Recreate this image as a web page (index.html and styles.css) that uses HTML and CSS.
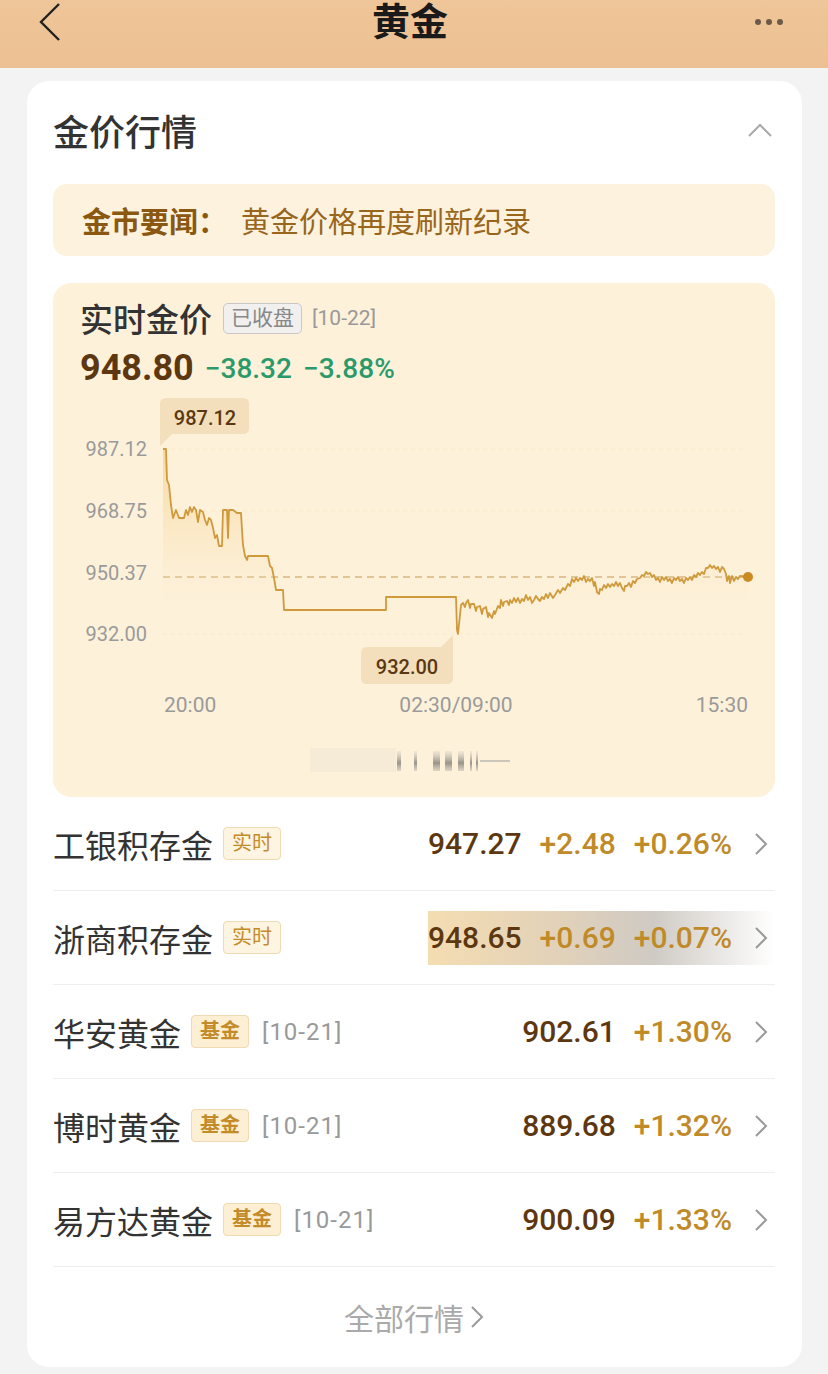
FILE: index.html
```html
<!DOCTYPE html>
<html lang="zh-CN">
<head>
  <meta charset="UTF-8">
  <title>黄金</title>
  <meta name="viewport" content="width=device-width, initial-scale=1.0">
  <link rel="stylesheet" href="styles.css">
</head>
<body>

  <header class="topbar">
    <svg class="back" width="26" height="42" viewBox="0 0 26 42"><path d="M22 3 L4 21 L22 39"/></svg>
    <h1 class="topbar-title">黄金</h1>
    <span class="more"><i></i><i></i><i></i></span>
  </header>

  <main class="card">
    <div class="section-head">
      <h2>金价行情</h2>
      <svg class="fold" width="26" height="16" viewBox="0 0 26 16"><path d="M2 14 L13 3 L24 14"/></svg>
    </div>

    <div class="news">
      <b>金市要闻：</b>
      <span>黄金价格再度刷新纪录</span>
    </div>

    <!-- realtime price + intraday chart -->
    <section class="live">
      <div class="live-head">
        <span class="live-title">实时金价</span>
        <span class="tag-closed">已收盘</span>
        <span class="live-date">[10-22]</span>
      </div>
      <div class="live-price">
        <span class="price-big">948.80</span>
        <span class="down">−38.32</span>
        <span class="down">−3.88%</span>
      </div>

      <svg class="chart" width="722" height="409" viewBox="53 388 722 409">
        <defs>
          <linearGradient id="area" x1="0" y1="449" x2="0" y2="615" gradientUnits="userSpaceOnUse">
            <stop offset="0" stop-color="#f6cf8a" stop-opacity="0.75"/>
            <stop offset="1" stop-color="#fbe9c8" stop-opacity="0"/>
          </linearGradient>
          <linearGradient id="bar" x1="0" y1="0" x2="0" y2="1">
            <stop offset="0" stop-color="#9a9a9a" stop-opacity="0.15"/>
            <stop offset="0.6" stop-color="#555" stop-opacity="0.8"/>
            <stop offset="1" stop-color="#777" stop-opacity="0.3"/>
          </linearGradient>
        </defs>

        <g class="grid">
          <line x1="163" y1="449" x2="748" y2="449"/>
          <line x1="163" y1="511" x2="748" y2="511"/>
          <line x1="163" y1="634" x2="748" y2="634"/>
        </g>
        <line class="avg" x1="163" y1="577" x2="748" y2="577"/>

        <g class="y-axis">
          <text x="147" y="456">987.12</text>
          <text x="147" y="518">968.75</text>
          <text x="147" y="580">950.37</text>
          <text x="147" y="641">932.00</text>
        </g>

        <path class="area" d="M163,449 L166,449 L167,480 L169,485 L171,505 L173,518 L176,510 L179,518 L184,518 L186,510 L188,515 L190,507 L192,512 L194,507 L196,510 L198,522 L200,510 L203,512 L205,520 L207,525 L209,518 L211,520 L213,528 L215,538 L217,535 L219,546 L222,546 L223,510 L227,510 L228,538 L229,510 L233,510 L237,513 L241,513 L242,530 L243,545 L245,556 L247,560 L248,556 L268,556 L270,566 L272,568 L274,578 L276,590 L283,590 L284,610 L386,610 L386,597 L456,597 L457,630 L458,634 L460,615 L461,605 L463,603 L465,607 L466,603 L468,600 L470,608 L471,604 L474,604 L476,611 L477,607 L480,606 L482,614 L483,609 L486,607 L488,617 L489,613 L492,618 L494,611 L495,614 L498,606 L500,608 L501,600 L503,606 L504,602 L507,601 L509,605 L510,600 L512,603 L514,598 L516,602 L518,598 L520,603 L522,599 L524,601 L526,595 L528,600 L530,597 L532,603 L534,600 L536,596 L538,599 L540,601 L542,597 L544,599 L546,594 L548,598 L550,593 L553,598 L555,595 L558,590 L560,593 L563,588 L565,590 L568,584 L570,586 L572,579 L574,582 L576,578 L578,581 L580,578 L582,580 L584,576 L586,582 L588,579 L590,581 L592,578 L594,586 L595,582 L597,592 L599,594 L600,589 L602,590 L604,585 L606,588 L608,584 L610,587 L612,584 L614,586 L616,582 L618,586 L620,583 L622,588 L624,591 L625,586 L627,586 L629,583 L631,587 L633,581 L635,583 L637,579 L640,578 L642,575 L644,576 L646,572 L648,574 L650,573 L652,577 L654,575 L656,580 L658,578 L660,582 L662,577 L664,580 L666,577 L668,581 L670,579 L672,583 L674,578 L676,580 L678,577 L680,581 L682,579 L684,583 L686,578 L688,580 L690,577 L692,580 L694,575 L696,577 L698,573 L700,575 L702,572 L704,574 L706,568 L708,568 L710,565 L712,568 L714,566 L716,569 L718,567 L720,572 L722,567 L724,569 L726,574 L727,581 L729,576 L730,583 L732,576 L734,581 L736,577 L738,579 L740,576 L748,577 L748,640 L163,640 Z"/>
        <path class="line" d="M163,449 L166,449 L167,480 L169,485 L171,505 L173,518 L176,510 L179,518 L184,518 L186,510 L188,515 L190,507 L192,512 L194,507 L196,510 L198,522 L200,510 L203,512 L205,520 L207,525 L209,518 L211,520 L213,528 L215,538 L217,535 L219,546 L222,546 L223,510 L227,510 L228,538 L229,510 L233,510 L237,513 L241,513 L242,530 L243,545 L245,556 L247,560 L248,556 L268,556 L270,566 L272,568 L274,578 L276,590 L283,590 L284,610 L386,610 L386,597 L456,597 L457,630 L458,634 L460,615 L461,605 L463,603 L465,607 L466,603 L468,600 L470,608 L471,604 L474,604 L476,611 L477,607 L480,606 L482,614 L483,609 L486,607 L488,617 L489,613 L492,618 L494,611 L495,614 L498,606 L500,608 L501,600 L503,606 L504,602 L507,601 L509,605 L510,600 L512,603 L514,598 L516,602 L518,598 L520,603 L522,599 L524,601 L526,595 L528,600 L530,597 L532,603 L534,600 L536,596 L538,599 L540,601 L542,597 L544,599 L546,594 L548,598 L550,593 L553,598 L555,595 L558,590 L560,593 L563,588 L565,590 L568,584 L570,586 L572,579 L574,582 L576,578 L578,581 L580,578 L582,580 L584,576 L586,582 L588,579 L590,581 L592,578 L594,586 L595,582 L597,592 L599,594 L600,589 L602,590 L604,585 L606,588 L608,584 L610,587 L612,584 L614,586 L616,582 L618,586 L620,583 L622,588 L624,591 L625,586 L627,586 L629,583 L631,587 L633,581 L635,583 L637,579 L640,578 L642,575 L644,576 L646,572 L648,574 L650,573 L652,577 L654,575 L656,580 L658,578 L660,582 L662,577 L664,580 L666,577 L668,581 L670,579 L672,583 L674,578 L676,580 L678,577 L680,581 L682,579 L684,583 L686,578 L688,580 L690,577 L692,580 L694,575 L696,577 L698,573 L700,575 L702,572 L704,574 L706,568 L708,568 L710,565 L712,568 L714,566 L716,569 L718,567 L720,572 L722,567 L724,569 L726,574 L727,581 L729,576 L730,583 L732,576 L734,581 L736,577 L738,579 L740,576 L748,577"/>
        <circle class="last" cx="748" cy="577" r="5"/>

        <!-- high / low markers -->
        <g class="tip">
          <path d="M166,398 H243 Q249,398 249,404 V428 Q249,434 243,434 H172 L160,446 V404 Q160,398 166,398 Z"/>
          <text x="205" y="425">987.12</text>
        </g>
        <g class="tip">
          <path d="M367,647 H441 L453,635 V678 Q453,684 447,684 H367 Q361,684 361,678 V653 Q361,647 367,647 Z"/>
          <text x="407" y="674">932.00</text>
        </g>

        <g class="x-axis">
          <text x="164" y="712" text-anchor="start">20:00</text>
          <text x="456" y="712" text-anchor="middle">02:30/09:00</text>
          <text x="748" y="712" text-anchor="end">15:30</text>
        </g>

        <!-- faded watermark -->
        <g class="watermark">
          <rect class="faint" x="310" y="748" width="86" height="24"/>
          <rect x="397" y="751" width="4" height="20"/>
          <rect x="414" y="751" width="3" height="20"/>
          <rect x="433" y="751" width="7" height="20"/>
          <rect x="445" y="751" width="7" height="20"/>
          <rect x="458" y="751" width="6" height="20"/>
          <rect x="470" y="751" width="2" height="20"/>
          <rect x="476" y="751" width="2" height="20"/>
          <rect class="dash" x="480" y="760" width="30" height="2"/>
        </g>
      </svg>
    </section>

    <ul class="quotes">
      <li class="quote">
        <span class="quote-name">工银积存金</span>
        <span class="tag">实时</span>
        <div class="quote-right">
          <span class="quote-price">947.27</span>
          <span class="up">+2.48</span>
          <span class="up">+0.26%</span>
          <svg class="arrow" width="14" height="24" viewBox="0 0 14 24"><path d="M2 2 L12 12 L2 22"/></svg>
        </div>
      </li>
      <li class="quote">
        <span class="quote-name">浙商积存金</span>
        <span class="tag">实时</span>
        <div class="quote-right flash">
          <span class="quote-price">948.65</span>
          <span class="up">+0.69</span>
          <span class="up">+0.07%</span>
          <svg class="arrow" width="14" height="24" viewBox="0 0 14 24"><path d="M2 2 L12 12 L2 22"/></svg>
        </div>
      </li>
      <li class="quote">
        <span class="quote-name">华安黄金</span>
        <span class="tag tag-fund">基金</span>
        <span class="quote-date">[10-21]</span>
        <div class="quote-right">
          <span class="quote-price">902.61</span>
          <span class="up">+1.30%</span>
          <svg class="arrow" width="14" height="24" viewBox="0 0 14 24"><path d="M2 2 L12 12 L2 22"/></svg>
        </div>
      </li>
      <li class="quote">
        <span class="quote-name">博时黄金</span>
        <span class="tag tag-fund">基金</span>
        <span class="quote-date">[10-21]</span>
        <div class="quote-right">
          <span class="quote-price">889.68</span>
          <span class="up">+1.32%</span>
          <svg class="arrow" width="14" height="24" viewBox="0 0 14 24"><path d="M2 2 L12 12 L2 22"/></svg>
        </div>
      </li>
      <li class="quote">
        <span class="quote-name">易方达黄金</span>
        <span class="tag tag-fund">基金</span>
        <span class="quote-date">[10-21]</span>
        <div class="quote-right">
          <span class="quote-price">900.09</span>
          <span class="up">+1.33%</span>
          <svg class="arrow" width="14" height="24" viewBox="0 0 14 24"><path d="M2 2 L12 12 L2 22"/></svg>
        </div>
      </li>
    </ul>

    <a class="all-link">全部行情<svg width="14" height="24" viewBox="0 0 14 24"><path d="M2 2 L12 12 L2 22"/></svg></a>
  </main>

</body>
</html>
```

FILE: styles.css
```css
body {
  font-family: Roboto, "Noto Sans CJK SC", sans-serif;
  background-color: #f3f3f3;
  margin: 0;
  padding: 0;
  color: #333;
}
h1, h2 {
  margin: 0;
}
ul {
  list-style: none;
  margin: 0;
  padding: 0;
}

/* top bar */
.topbar {
  display: grid;
  grid-template-columns: 1fr auto 1fr;
  align-items: center;
  height: 44px;
  padding: 0 45px 24px 37px;
  background: linear-gradient(180deg, #efc699 0%, #ecc092 100%);
}
.back path {
  fill: none;
  stroke: #222;
  stroke-width: 2.4;
}
.topbar-title {
  font-size: 38px;
  font-weight: 700;
  color: #1a1a1a;
  line-height: 44px;
}
.more {
  justify-self: end;
  display: flex;
  gap: 5px;
}
.more i {
  width: 6px;
  height: 6px;
  border-radius: 50%;
  background-color: #6b5a48;
}

/* card */
.card {
  background-color: #ffffff;
  border-radius: 22px;
  margin: 13px 26px 8px 27px;
  padding: 0 27px 0 26px;
}
.section-head {
  display: flex;
  justify-content: space-between;
  align-items: center;
  height: 42px;
  padding-top: 28px;
  margin-bottom: 33px;
}
.section-head h2 {
  font-size: 36px;
  font-weight: 500;
  color: #333;
}
.fold {
  margin-right: 2px;
}
.fold path {
  fill: none;
  stroke: #aaa;
  stroke-width: 2;
}

.news {
  display: flex;
  align-items: center;
  height: 72px;
  padding: 0 29px;
  background-color: #fdf2dd;
  border-radius: 14px;
  font-size: 29px;
  margin-bottom: 27px;
}
.news b {
  color: #8a5811;
  font-weight: 700;
  margin-right: 14px;
}
.news span {
  color: #98661c;
}

/* realtime block */
.live {
  background-color: #fdf1da;
  border-radius: 18px;
  padding-top: 18px;
}
.live-head {
  display: flex;
  align-items: center;
  height: 34px;
  padding-left: 27px;
}
.live-title {
  font-size: 33px;
  font-weight: 500;
  color: #333;
}
.tag-closed {
  margin-left: 11px;
  height: 29px;
  line-height: 29px;
  padding: 0 7px;
  font-size: 21px;
  color: #888;
  background-color: #f1f0ee;
  border: 1px solid #c8c8c8;
  border-radius: 5px;
}
.live-date {
  margin-left: 10px;
  font-size: 21px;
  color: #999;
}
.live-price {
  display: flex;
  align-items: center;
  gap: 11px;
  height: 40px;
  margin-top: 13px;
  padding-left: 27px;
}
.price-big {
  font-size: 36px;
  font-weight: 700;
  color: #5c3710;
}
.down {
  font-size: 28px;
  font-weight: 500;
  color: #2b9a6b;
}
.chart {
  display: block;
}
.grid line {
  stroke: #fbe8c8;
  stroke-width: 1;
  stroke-dasharray: 4 4;
}
.avg {
  stroke: #c89a52;
  stroke-width: 1.2;
  stroke-dasharray: 7 5;
}
.y-axis text {
  font-size: 20px;
  fill: #9a9a9a;
  text-anchor: end;
}
.x-axis text {
  font-size: 21px;
  fill: #9a9a9a;
}
.area {
  fill: url(#area);
}
.line {
  fill: none;
  stroke: #cf9a3c;
  stroke-width: 1.8;
  stroke-linejoin: round;
}
.last {
  fill: #c98b22;
}
.tip path {
  fill: #f3dfbc;
}
.tip text {
  font-size: 20px;
  font-weight: 500;
  fill: #5a3812;
  text-anchor: middle;
}
.watermark rect {
  fill: url(#bar);
  opacity: 0.75;
}
.watermark .faint {
  fill: #e8e0d2;
  opacity: 0.35;
}
.watermark .dash {
  fill: #999;
  opacity: 0.5;
}

/* quote list */
.quote {
  display: flex;
  align-items: center;
  height: 93px;
  border-bottom: 1px solid #eeeeee;
}
.quote-name {
  font-size: 32px;
  color: #333;
}
.tag {
  margin-left: 10px;
  height: 31px;
  line-height: 31px;
  padding: 0 8px;
  font-size: 20px;
  color: #c48b2a;
  background-color: #fdf4e2;
  border: 1px solid #efdab3;
  border-radius: 4px;
}
.tag-fund {
  font-weight: 700;
  background-color: #fcefd3;
}
.quote-date {
  margin-left: 13px;
  font-size: 24px;
  letter-spacing: 1px;
  color: #999;
}
.quote-right {
  margin-left: auto;
  display: flex;
  align-items: center;
  gap: 18px;
  height: 54px;
  padding-right: 7px;
}
.quote-right.flash {
  background: linear-gradient(90deg, #f5ddb2 0%, #e3d2b8 35%, #cfcac4 65%, #ffffff 100%);
}
.quote-price {
  font-size: 30px;
  font-weight: 500;
  color: #5c3710;
}
.up {
  font-size: 30px;
  font-weight: 500;
  color: #c08a28;
}
.arrow {
  margin-left: 4px;
}
.arrow path,
.all-link path {
  fill: none;
  stroke: #9a9a9a;
  stroke-width: 2;
}

.all-link {
  display: flex;
  justify-content: center;
  align-items: center;
  height: 100px;
  font-size: 30px;
  color: #aaa;
}
.all-link svg {
  margin-left: 6px;
}
```
